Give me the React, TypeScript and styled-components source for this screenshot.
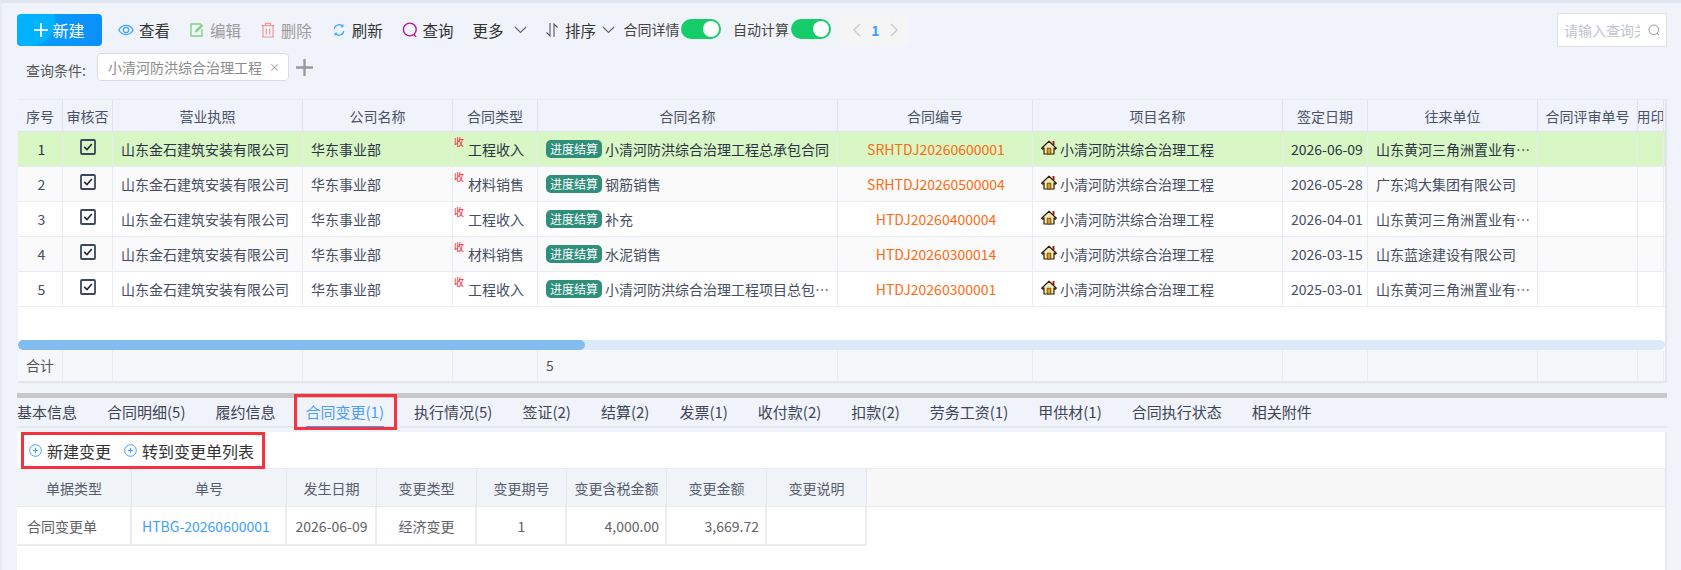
import React from 'react';
import styled, { createGlobalStyle } from 'styled-components';

const GlobalStyle = createGlobalStyle`
  html, body {
    margin: 0;
    padding: 0;
    height: 570px;
    overflow: hidden;
    background: #f0f3f9;
    font-family: "Noto Sans CJK SC", "Noto Sans", sans-serif;
    font-size: 14px;
  }
  * { box-sizing: border-box; }
`;

const Page = styled.div`
  width: 1681px;
  height: 570px;
  border-top: 3px solid #dfe5ee;
  border-left: 2px solid #e6eaf2;
  padding-left: 15px;
  display: flex;
  flex-direction: column;
`;

const Toolbar = styled.div`
  display: flex;
  align-items: center;
  height: 34px;
  margin-top: 10px;
  padding-right: 14px;
`;

const NewButton = styled.button`
  width: 85px;
  height: 32px;
  border: 0;
  border-radius: 4px;
  padding: 0;
  margin-right: 16px;
  color: #fff;
  font: inherit;
  font-size: 16px;
  display: flex;
  align-items: center;
  justify-content: center;
  gap: 4px;
  background: radial-gradient(circle at 12px 6px, #00b2ff 0 26px, transparent 27px),
    linear-gradient(90deg, #0aa0fb, #0a8ffa);
`;

const ToolItem = styled.div<{ $off?: boolean }>`
  display: flex;
  align-items: center;
  gap: 5px;
  width: 70.9px;
  font-size: 15.5px;
  color: ${p => (p.$off ? '#9a9a9a' : '#333')};
  white-space: nowrap;
`;

const DropItem = styled(ToolItem)`
  gap: 11px;
  width: 72.5px;
`;

const SortItem = styled(ToolItem)`
  gap: 6px;
  width: 78.5px;
`;

const SwitchLabel = styled.div`
  display: flex;
  align-items: center;
  gap: 2px;
  font-size: 14px;
  color: #444;
  margin-top: -3px;
  margin-right: 11.5px;
`;

const SwitchTrack = styled.div`
  width: 40px;
  height: 20px;
  border-radius: 10px;
  background: #14cd68;
  display: flex;
  align-items: center;
  justify-content: flex-end;
  padding-right: 2px;
`;

const SwitchThumb = styled.span`
  width: 16px;
  height: 16px;
  border-radius: 50%;
  background: #fff;
`;

const Pager = styled.div`
  width: 70px;
  height: 28px;
  margin-left: -2px;
  background: #f5f5f5;
  display: flex;
  align-items: center;
  justify-content: space-around;
  padding: 0 6px;
  color: #409eff;
  font-weight: 700;
  font-size: 14px;
`;

const SearchBox = styled.div`
  margin-left: auto;
  width: 110px;
  height: 34px;
  background: #fff;
  border: 1px solid #dcdfe6;
  display: flex;
  align-items: center;
  padding-left: 6px;
  gap: 8px;
`;

const SearchInput = styled.input`
  width: 76px;
  border: 0;
  outline: 0;
  padding: 0;
  background: transparent;
  font: inherit;
  font-size: 14px;
  &::placeholder { color: #c0c4cc; }
`;

const QueryRow = styled.div`
  display: flex;
  align-items: center;
  height: 28px;
  margin-top: 6px;
  padding-left: 9px;
`;

const QueryLabel = styled.span`
  color: #555;
  font-size: 14px;
  width: 71px;
  margin-top: 5px;
  white-space: nowrap;
`;

const QueryTag = styled.div`
  width: 192px;
  height: 28px;
  background: #fff;
  border: 1px solid #d8dbe2;
  border-radius: 4px;
  padding-left: 10px;
  display: flex;
  align-items: center;
  justify-content: space-between;
  padding-right: 8px;
  color: #8c8c8c;
`;

const TagClose = styled.span`
  color: #999;
  font-size: 11px;
`;

const PlusWrap = styled.span`
  display: flex;
  margin-left: 7px;
`;

const MainTable = styled.div`
  margin-top: 18px;
  margin-left: 1px;
  width: 1649px;
  background: #fff;
  border-top: 1px solid #e6e9f0;
  border-right: 2px solid #e2e5ec;
  border-bottom: 2px solid #e2e5ec;
`;

const mainColumns = '45px 50px 190px 150px 85px 300px 195px 250px 85px 170px 100px 26px';

const GridRow = styled.div`
  display: grid;
  grid-template-columns: ${mainColumns};
`;

const HeadRow = styled(GridRow)`
  height: 32px;
  background: #f0f3f9;
  border-bottom: 1px solid #dfe3ea;
  color: #4a5268;
`;

const BodyRow = styled(GridRow)<{ $kind: 'active' | 'odd' | 'even' }>`
  height: 35px;
  border-bottom: 1px solid #e9ecf2;
  color: ${p => (p.$kind === 'active' ? '#2a3345' : '#454e62')};
  background: ${p => (p.$kind === 'active' ? '#d9f7c4' : p.$kind === 'even' ? '#fafafa' : '#fff')};
`;

const FootRow = styled(GridRow)`
  height: 31px;
  background: #f5f7fb;
  color: #555;
`;

const Cell = styled.div<{ $align?: 'left' | 'center' | 'right' }>`
  position: relative;
  display: flex;
  align-items: center;
  min-width: 0;
  padding: ${p => (p.$align === 'center' ? '0' : '0 6px 0 8px')};
  justify-content: ${p => (p.$align === 'center' ? 'center' : 'flex-start')};
  border-right: 1px solid #e9ecf2;
  white-space: nowrap;
  overflow: hidden;
`;

const HeadCell = styled(Cell)`
  border-right-color: #dfe3ea;
`;

const FootCell = styled(Cell)`
  padding-bottom: 2px;
`;

const TypeCell = styled(Cell)`
  padding-left: 2px;
`;

const NoCell = styled(Cell)`
  padding-left: 2px;
`;

const IndexCell = styled(Cell)`
  padding-left: 3px;
`;

const Clip = styled.span`
  min-width: 0;
  overflow: hidden;
  text-overflow: ellipsis;
`;

const CheckWrap = styled.span`
  display: flex;
  margin-top: -4px;
`;

const ReceiveMark = styled.span`
  position: absolute;
  left: 1px;
  top: 4px;
  color: #ff2030;
  font-size: 10px;
  line-height: 11px;
`;

const ProgressTag = styled.span`
  flex: none;
  width: 56px;
  height: 18px;
  margin-right: 3px;
  border-radius: 5px;
  background: #2f8f7b;
  color: #fff;
  font-size: 12px;
  line-height: 18px;
  text-align: center;
`;

const ContractNo = styled.span`
  color: #ff6a13;
`;

const HouseWrap = styled.span`
  display: flex;
  flex: none;
  margin-right: 3px;
  margin-top: -4px;
`;

const BlankArea = styled.div`
  height: 33px;
`;

const ScrollTrack = styled.div`
  height: 10px;
  border-radius: 5px;
  background: #dbe9f8;
`;

const ScrollThumb = styled.div`
  height: 10px;
  border-radius: 5px;
  background: #82bdf0;
`;

const Splitter = styled.div`
  margin-top: 10px;
  width: 1650px;
  height: 5px;
  background: #c8c8c8;
`;

const TabBar = styled.div`
  width: 1650px;
  height: 30px;
  border-bottom: 2px solid #e4e8f0;
  display: flex;
  gap: 30px;
  margin-bottom: 4px;
`;

const Tab = styled.div<{ $active?: boolean }>`
  position: relative;
  height: 31px;
  line-height: 28px;
  font-size: 15px;
  white-space: nowrap;
  color: ${p => (p.$active ? '#4a9eff' : '#3d4456')};
  border-bottom: ${p => (p.$active ? '3px solid #409eff' : '0')};
`;

const RedFrame = styled.span`
  position: absolute;
  left: -12px;
  right: -13px;
  top: -4px;
  bottom: -4px;
  border: 3px solid #f5333f;
`;

const Panel = styled.div`
  flex: 1;
  width: 1650px;
  background: #fff;
  border-right: 2px solid #e6e9f0;
`;

const ActionRow = styled.div`
  height: 36px;
`;

const ActionBox = styled.div`
  display: inline-flex;
  align-items: center;
  height: 37px;
  margin-left: 4px;
  padding-left: 5px;
  width: 244px;
  border: 3px solid #f5333f;
  position: relative;
  gap: 13px;
  font-size: 16px;
  color: #333;
`;

const ActionItem = styled.span`
  display: flex;
  align-items: center;
  gap: 5px;
  white-space: nowrap;
`;

const subColumns = '115px 155px 90px 100px 90px 100px 100px 100px 1fr';

const SubHead = styled.div`
  display: grid;
  grid-template-columns: ${subColumns};
  height: 39px;
  background: #f7f7f7;
  border-top: 1px solid #e8eaee;
  border-bottom: 1px solid #e8eaee;
  color: #555c6b;
`;

const SubHeadCell = styled.div`
  display: flex;
  align-items: center;
  justify-content: center;
  background: #f0f3f8;
  border-right: 1px solid #e4e7ec;
`;

const SubRow = styled.div`
  display: grid;
  grid-template-columns: 115px 155px 90px 100px 90px 100px 100px 100px;
  width: 850px;
  height: 39px;
  border-bottom: 2px solid #ebedf1;
  color: #606266;
`;

const SubCell = styled.div<{ $align: 'left' | 'center' | 'right'; $link?: boolean }>`
  display: flex;
  align-items: center;
  padding: ${p => (p.$align === 'center' ? '0 0 0 1px' : '0 6px 0 10px')};
  justify-content: ${p => (p.$align === 'center' ? 'center' : p.$align === 'right' ? 'flex-end' : 'flex-start')};
  border-right: 2px solid #ebedf1;
  color: ${p => (p.$link ? '#409eff' : 'inherit')};
`;

const Eye = () => (
  <svg width="16" height="16" viewBox="0 0 16 16" fill="none" stroke="#3ea6ff" strokeWidth="1.3">
    <path d="M.8 8C2.6 4.9 5.1 3.4 8 3.4S13.4 4.9 15.2 8C13.4 11.1 10.9 12.6 8 12.6S2.6 11.1.8 8Z" />
    <circle cx="8" cy="8" r="2.6" />
  </svg>
);

const Edit = () => (
  <svg width="16" height="16" viewBox="0 0 16 16" fill="none" stroke="#7fd27f" strokeWidth="1.4">
    <path d="M12 2H2v12h11V7" />
    <path d="M6 10.5 6.6 8 12.6 2l1.8 1.8-6 6z" fill="#7fd27f" stroke="none" />
  </svg>
);

const Trash = () => (
  <svg width="16" height="16" viewBox="0 0 16 16" fill="none" stroke="#f29696" strokeWidth="1.2">
    <path d="M1.5 3.6h13M5.5 3.4V1.4h5v2M3 3.8V15h10V3.8M6.3 6.5v6M9.7 6.5v6" />
  </svg>
);

const Refresh = () => (
  <svg width="16" height="16" viewBox="-2 -2 20 20" fill="none" stroke="#2aa5f5" strokeWidth="1.5">
    <path d="M2 6.5A6.2 6.2 0 0 1 12.6 3.4" />
    <path d="M14 9.5A6.2 6.2 0 0 1 3.4 12.6" />
    <path d="M13 1v3h-3M3 15v-3h3" strokeWidth="1.2" />
  </svg>
);

const Query = () => (
  <svg width="16" height="16" viewBox="0 0 16 16" fill="none" stroke="#b5178f" strokeWidth="1.4">
    <circle cx="7.8" cy="7.5" r="6.4" />
    <path d="M11.8 12.3l2.2 2.6" />
  </svg>
);

const Chevron = ({ color = '#666' }: { color?: string }) => (
  <svg width="13" height="8" viewBox="0 0 13 8" fill="none" stroke={color} strokeWidth="1.1">
    <path d="M1 1l5.500 5.500L12 1" />
  </svg>
);

const Sort = () => (
  <svg width="14" height="16" viewBox="0 0 14 16" fill="none" stroke="#555" strokeWidth="1.1">
    <path d="M5 1v13L1.500 10.500M9 15V2l3.500 3.500" />
  </svg>
);

const PagerArrow = ({ dir }: { dir: 'left' | 'right' }) => (
  <svg width="9" height="14" viewBox="0 0 9 14" fill="none" stroke="#c4c8d0" strokeWidth="1.4">
    <path d={dir === 'left' ? 'M8 1 2 7l6 6' : 'M1 1l6 6-6 6'} />
  </svg>
);

const SearchIcon = () => (
  <svg width="12" height="12" viewBox="0 0 12 12" fill="none" stroke="#999" strokeWidth="1">
    <circle cx="5.800" cy="5.800" r="4.800" />
    <path d="M9 9l2 2" />
  </svg>
);

const PlusIcon = ({ size, color, weight }: { size: number; color: string; weight: number }) => (
  <svg width={size} height={size} viewBox="0 0 16 16" fill="none" stroke={color} strokeWidth={weight}>
    <path d="M8 0v16M0 8h16" />
  </svg>
);

const CheckBox = () => (
  <svg width="16" height="16" viewBox="0 0 16 16" fill="none">
    <rect x="1" y="1" width="14" height="14" rx="1" stroke="#3b4660" strokeWidth="1.800" />
    <path d="M4.200 7.800 7 10.500l4.800-5.500" stroke="#20283c" strokeWidth="1.600" />
  </svg>
);

const House = () => (
  <svg width="16" height="15" viewBox="0 0 16 15">
    <path d="M11.500 1h2v4h-2z" fill="#a5231c" />
    <path d="M8 1.200.6 8.200l1 1L3 8v6h10V8l1.400 1.200 1-1z" fill="#f7e9bb" stroke="#2c2108" strokeWidth="1.200" strokeLinejoin="round" />
    <path d="M6.200 8.200h3.600V14H6.200z" fill="#e09a12" stroke="#5b3a05" strokeWidth=".8" />
  </svg>
);

const CirclePlus = () => (
  <svg width="13" height="13" viewBox="0 0 13 13" fill="none" stroke="#409eff" strokeWidth="1">
    <circle cx="6.500" cy="6.500" r="5.800" />
    <path d="M6.500 4v5M4 6.500h5" />
  </svg>
);

const headers = ['序号', '审核否', '营业执照', '公司名称', '合同类型', '合同名称', '合同编号', '项目名称', '签定日期', '往来单位', '合同评审单号', '用印'];

const contracts = [
  { type: '工程收入', name: '小清河防洪综合治理工程总承包合同', no: 'SRHTDJ20260600001', date: '2026-06-09', partner: '山东黄河三角洲置业有限公司' },
  { type: '材料销售', name: '钢筋销售', no: 'SRHTDJ20260500004', date: '2026-05-28', partner: '广东鸿大集团有限公司' },
  { type: '工程收入', name: '补充', no: 'HTDJ20260400004', date: '2026-04-01', partner: '山东黄河三角洲置业有限公司' },
  { type: '材料销售', name: '水泥销售', no: 'HTDJ20260300014', date: '2026-03-15', partner: '山东蓝途建设有限公司' },
  { type: '工程收入', name: '小清河防洪综合治理工程项目总包合同', no: 'HTDJ20260300001', date: '2025-03-01', partner: '山东黄河三角洲置业有限公司' },
];

const tabs = ['基本信息', '合同明细(5)', '履约信息', '合同变更(1)', '执行情况(5)', '签证(2)', '结算(2)', '发票(1)', '收付款(2)', '扣款(2)', '劳务工资(1)', '甲供材(1)', '合同执行状态', '相关附件'];

const subHeaders = ['单据类型', '单号', '发生日期', '变更类型', '变更期号', '变更含税金额', '变更金额', '变更说明'];

const rowKind = (i: number): 'active' | 'odd' | 'even' => (i === 0 ? 'active' : i % 2 === 1 ? 'even' : 'odd');

export default function App() {
  return (
    <Page>
      <GlobalStyle />
      <Toolbar>
        <NewButton>
          <PlusIcon size={14} color="#fff" weight={2} />
          新建
        </NewButton>
        <ToolItem><Eye />查看</ToolItem>
        <ToolItem $off><Edit />编辑</ToolItem>
        <ToolItem $off><Trash />删除</ToolItem>
        <ToolItem><Refresh />刷新</ToolItem>
        <ToolItem><Query />查询</ToolItem>
        <DropItem>更多<Chevron /></DropItem>
        <SortItem><Sort />排序<Chevron /></SortItem>
        <SwitchLabel>合同详情<SwitchTrack><SwitchThumb /></SwitchTrack></SwitchLabel>
        <SwitchLabel>自动计算<SwitchTrack><SwitchThumb /></SwitchTrack></SwitchLabel>
        <Pager><PagerArrow dir="left" />1<PagerArrow dir="right" /></Pager>
        <SearchBox>
          <SearchInput placeholder="请输入查询关键字" readOnly />
          <SearchIcon />
        </SearchBox>
      </Toolbar>

      <QueryRow>
        <QueryLabel>查询条件:</QueryLabel>
        <QueryTag>小清河防洪综合治理工程<TagClose>×</TagClose></QueryTag>
        <PlusWrap><PlusIcon size={17} color="#999" weight={2.200} /></PlusWrap>
      </QueryRow>

      <MainTable>
        <HeadRow>
          {headers.map(h => <HeadCell key={h} $align="center">{h}</HeadCell>)}
        </HeadRow>
        {contracts.map((c, i) => (
          <BodyRow key={c.no} $kind={rowKind(i)}>
            <IndexCell $align="center">{i + 1}</IndexCell>
            <Cell $align="center"><CheckWrap><CheckBox /></CheckWrap></Cell>
            <Cell>山东金石建筑安装有限公司</Cell>
            <Cell>华东事业部</Cell>
            <TypeCell $align="center"><ReceiveMark>收</ReceiveMark>{c.type}</TypeCell>
            <Cell><ProgressTag>进度结算</ProgressTag><Clip>{c.name}</Clip></Cell>
            <NoCell $align="center"><ContractNo>{c.no}</ContractNo></NoCell>
            <Cell><HouseWrap><House /></HouseWrap>小清河防洪综合治理工程</Cell>
            <Cell>{c.date}</Cell>
            <Cell><Clip>{c.partner}</Clip></Cell>
            <Cell />
            <Cell />
          </BodyRow>
        ))}
        <BlankArea />
        <ScrollTrack>
          <ScrollThumb style={{ width: `${(567 / 1647) * 100}%` }} />
        </ScrollTrack>
        <FootRow>
          <FootCell $align="center">合计</FootCell>
          <FootCell /><FootCell /><FootCell /><FootCell />
          <FootCell>5</FootCell>
          <FootCell /><FootCell /><FootCell /><FootCell /><FootCell /><FootCell />
        </FootRow>
      </MainTable>

      <Splitter />
      <TabBar>
        {tabs.map((t, i) => (
          <Tab key={t} $active={i === 3}>
            {t}
            {i === 3 && <RedFrame />}
          </Tab>
        ))}
      </TabBar>

      <Panel>
        <ActionRow>
          <ActionBox>
            <ActionItem><CirclePlus />新建变更</ActionItem>
            <ActionItem><CirclePlus />转到变更单列表</ActionItem>
          </ActionBox>
        </ActionRow>
        <SubHead>
          {subHeaders.map(h => <SubHeadCell key={h}>{h}</SubHeadCell>)}
        </SubHead>
        <SubRow>
          <SubCell $align="left">合同变更单</SubCell>
          <SubCell $align="left" $link>HTBG-20260600001</SubCell>
          <SubCell $align="center">2026-06-09</SubCell>
          <SubCell $align="center">经济变更</SubCell>
          <SubCell $align="center">1</SubCell>
          <SubCell $align="right">4,000.00</SubCell>
          <SubCell $align="right">3,669.72</SubCell>
          <SubCell $align="left" />
        </SubRow>
      </Panel>
    </Page>
  );
}
